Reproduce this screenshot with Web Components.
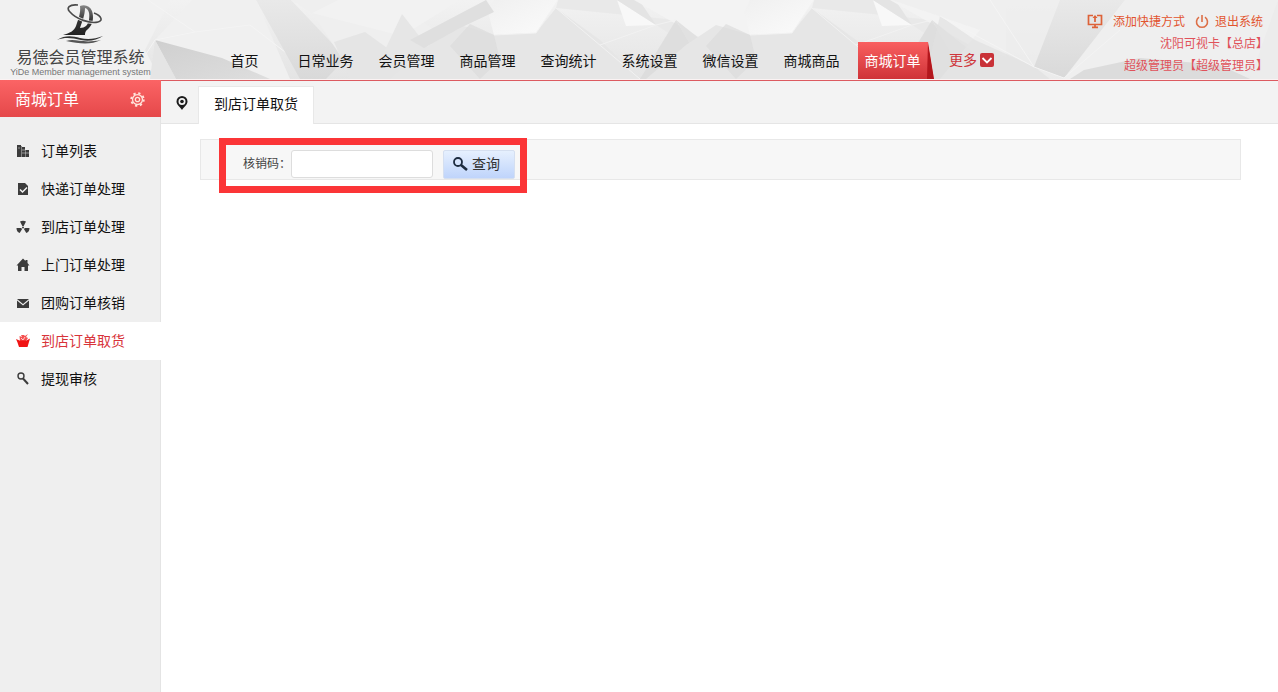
<!DOCTYPE html>
<html lang="zh-CN">
<head>
<meta charset="utf-8">
<title>到店订单取货</title>
<style>
html, body { height: 100%; }
body { margin: 0; background: #fff; color: #111; font: 14px/20px "Liberation Sans", "Noto Sans CJK SC", sans-serif; }
yd-app { min-height: 100%; }
</style>
</head>
<body>
<yd-app></yd-app>

<template id="t-app">
<style>
:host { display: flex; flex-direction: column; min-height: 100%; }
.body { display: flex; flex: 1; }
yd-sidebar { flex: none; }
main { flex: 1; min-width: 0; }
</style>
<yd-header></yd-header>
<div class="body">
  <yd-sidebar>
    <span slot="title">商城订单</span>
    <yd-item icon="list">订单列表</yd-item>
    <yd-item icon="doc">快递订单处理</yd-item>
    <yd-item icon="fan">到店订单处理</yd-item>
    <yd-item icon="home">上门订单处理</yd-item>
    <yd-item icon="mail">团购订单核销</yd-item>
    <yd-item icon="bag" active>到店订单取货</yd-item>
    <yd-item icon="key">提现审核</yd-item>
  </yd-sidebar>
  <main>
    <yd-tabs>到店订单取货</yd-tabs>
    <yd-search></yd-search>
  </main>
</div>
</template>

<template id="t-header">
<style>
:host { display: block; position: relative; background: #ececec; border-bottom: 1px solid #dc5a60; }
.bg { position: absolute; inset: 0; overflow: hidden; }
.bg svg { display: block; }
.row { position: relative; display: flex; height: 79px; border-bottom: 1px solid #fbf3f3; }
yd-logo { flex: none; width: 161px; }
nav { display: flex; align-items: flex-end; margin-left: 43px; }
yd-user { margin-left: auto; }
.more { display: flex; align-items: center; gap: 3px; height: 38px; margin-left: 16px; color: #cf353b; text-decoration: none; white-space: nowrap; }
</style>
<div class="bg"><svg width="1920" height="80" viewBox="0 0 1920 80" aria-hidden="true">
  <defs>
    <linearGradient id="base" x1="0" y1="0" x2="0" y2="1"><stop offset="0" stop-color="#f2f2f2"/><stop offset="1" stop-color="#e4e4e4"/></linearGradient>
    <linearGradient id="dark" x1="0" y1="0" x2="1" y2="1"><stop offset="0" stop-color="#cfcfcf"/><stop offset="1" stop-color="#dedede"/></linearGradient>
    <linearGradient id="band" x1="0" y1="0" x2="0" y2="1"><stop offset="0" stop-color="#e9e9e9"/><stop offset="1" stop-color="#d9d9d9"/></linearGradient>
    <linearGradient id="light" x1="0" y1="0" x2="1" y2="1"><stop offset="0" stop-color="#f0f0f0"/><stop offset="1" stop-color="#fbfbfb"/></linearGradient>
    <g id="facets">
      <path d="M494 0H558L536 33L494 35L488 12Z" fill="url(#light)"/>
      <path d="M460 25L494 35L536 33L556 8L600 40L640 79H390L430 45Z" fill="#e6e6e6"/>
      <path d="M494 35L470 24L450 46L480 79L500 60Z" fill="#dcdcdc" opacity=".7"/>
      <path d="M558 0H619L700 54L676 20L556 8Z" fill="#e9e9e9"/>
      <path d="M617 0L626 26L656 25Z" fill="#f8f8f8"/>
      <path d="M617 0H639L656 25Z" fill="#e4e4e4"/>
      <path d="M634 0H750V56L720 49Z" fill="#f3f3f3"/>
      <path d="M676 20L711 79H640Z" fill="#dbdbdb" opacity=".8"/>
      <path d="M676 20L750 79H710Z" fill="#e1e1e1"/>
      <path d="M558 0L536 33L494 35M556 8L640 79M600 45L656 25L676 20" fill="none" stroke="#f2f2f2"/>
    </g>
  </defs>
  <rect width="1920" height="80" fill="url(#base)"/>
  <path d="M0 0H170L145 50L160 79H0Z" fill="#f1f1f1"/>
  <path d="M192 0H256L290 79H200L155 40Z" fill="#f0f0f0"/>
  <path d="M155 40L222 58L270 79H176Z" fill="url(#dark)"/>
  <path d="M155 40L176 79H150Z" fill="#e5e5e5"/>
  <path d="M148 0L195 32L155 40L130 79M195 32L250 25L320 79" fill="none" stroke="#f4f4f4"/>
  <path d="M256 0H291L346 58L326 79H300Z" fill="url(#band)"/>
  <path d="M291 0H400L440 36L350 70L312 13Z" fill="#efefef"/>
  <path d="M312 13L338 0H460L402 36Z" fill="#f2f2f2"/>
  <path d="M334 42L365 32L430 79H350Z" fill="#e5e5e5"/>
  <path d="M402 14L430 50L410 79L385 50Z" fill="#e6e6e6"/>
  <use href="#facets"/>
  <path d="M486 0L494 12L460 28L424 48L410 40Z" fill="#dfdfdf"/>
  <use href="#facets" x="256"/>
  <path d="M892 0H1278V79H940L980 30Z" fill="#eee" opacity=".75"/>
  <path d="M940 16L975 40L1035 67L1050 79H925Z" fill="#e1e1e1" opacity=".7"/>
  <path d="M1060 0H1125L1064 78L1034 67Z" fill="url(#band)"/>
  <path d="M1125 0H1278V60L1170 79H1064Z" fill="#efefef"/>
  <path d="M1084 70L1140 58L1220 65L1250 79H1070Z" fill="#dcdcdc"/>
  <path d="M1034 67L1064 78L1120 30M940 16L1034 67L990 0" fill="none" stroke="#f4f4f4"/>
  <path d="M1278 0H1920V79H1250Z" fill="#ececec"/>
</svg></div>
<div class="row">
  <yd-logo></yd-logo>
  <nav aria-label="主导航">
    <yd-nav>首页</yd-nav><yd-nav>日常业务</yd-nav><yd-nav>会员管理</yd-nav><yd-nav>商品管理</yd-nav><yd-nav>查询统计</yd-nav><yd-nav>系统设置</yd-nav><yd-nav>微信设置</yd-nav><yd-nav>商城商品</yd-nav><yd-nav active>商城订单</yd-nav>
    <a class="more" href="#">更多<svg width="14" height="14" viewBox="0 0 14 14" aria-hidden="true"><rect width="14" height="14" rx="2" fill="#c93238"/><path d="M2.500 5L7 9.500L11.500 5" fill="none" stroke="#fff" stroke-width="1.800"/></svg></a>
  </nav>
  <yd-user></yd-user>
</div>
</template>

<template id="t-logo">
<style>
:host { display: flex; flex-direction: column; align-items: center; color: #444; white-space: nowrap; }
svg { display: block; margin-top: 4px; }
b { font-weight: 400; font-size: 16px; line-height: 20px; margin-top: 3px; }
small { font-size: 9px; line-height: 10px; color: #777; margin-top: -1px; }
</style>
<svg width="50" height="41" viewBox="0 0 50 41" aria-hidden="true">
  <defs><linearGradient id="ink" x1="0" y1="0" x2="0" y2="1"><stop offset="0" stop-color="#888"/><stop offset=".5" stop-color="#333"/><stop offset="1" stop-color="#222"/></linearGradient></defs>
  <path fill="url(#ink)" fill-rule="evenodd" d="M24 2C29 0 34 2 36 7C38 13 37 20 33 24C31 26 29 27 29 31L7 31C14 29 18 27 20 22C22 16 25 9 24 2ZM29 4C29 11 26 18 24 24C29 24 32 21 33 16C34 10 33 5 29 4Z"/>
  <path d="M22 1C13 0 10 4 14 8C20 15 34 20 42 18C47 17 46 12 38 9" fill="none" stroke="#f1f1f1" stroke-width="3"/>
  <path d="M22 1C13 0 10 4 14 8C20 15 34 20 42 18C47 17 46 12 38 9" fill="none" stroke="#4a4a4a" stroke-width="1.600"/>
  <path d="M1 36C9 31 16 32 24 34C32 36 39 35 47 32C41 36 33 38 25 36C16 34 9 33 1 36Z" fill="#333"/>
  <path d="M10 37C20 34 26 40 45 36C35 41 24 40 10 37Z" fill="#555"/>
</svg>
<b>易德会员管理系统</b><small>YiDe Member management system</small>
</template>

<template id="t-nav">
<style>
:host { display: block; width: 81px; }
a { display: block; box-sizing: border-box; height: 37px; line-height: 38px; text-align: center; color: #111; text-decoration: none; white-space: nowrap; }
:host([active]) a { position: relative; margin: 0 0 0 6px; padding-right: 7px; width: 76px; color: #fff; background: linear-gradient(#f95f60, #cf3338); clip-path: polygon(0 0, 70px 0, 76px 100%, 0 100%); }
:host([active]) a::after { content: ""; position: absolute; right: 0; top: 0; width: 7px; height: 37px; background: #b3171d; clip-path: polygon(1px 0, 100% 100%, 0 100%); }
</style>
<a href="#"><slot></slot></a>
</template>

<template id="t-user">
<style>
:host { display: block; padding: 11px 10px 0 0; color: #e0525a; font-size: 12px; line-height: 22px; text-align: right; white-space: nowrap; }
.top { display: flex; align-items: center; justify-content: flex-end; gap: 10px; padding-right: 5px; }
a { display: flex; align-items: center; gap: 6px; color: #e2542e; text-decoration: none; }
a:first-child { gap: 10px; }
</style>
<div class="top">
  <a href="#"><svg width="16" height="16" viewBox="0 0 16 16" aria-hidden="true" fill="none" stroke="#dd6238" stroke-width="1.700"><path d="M6 1.500H1.500V10.500H14.500V1.500H10M8 8V2"/><path d="M5.500 4L8 1L10.500 4Z" fill="#dd6238" stroke="none"/><path d="M8 11V13M5 13.300H11"/></svg>添加快捷方式</a>
  <a href="#"><svg width="14" height="14" viewBox="0 0 14 14" aria-hidden="true" fill="none" stroke="#dd7048" stroke-width="1.600"><path d="M4 2.200A5.500 5.500 0 1 0 10 2.200M7 0V7"/></svg>退出系统</a>
</div>
<div>沈阳可视卡【总店】</div>
<div>超级管理员【超级管理员】</div>
</template>

<template id="t-sidebar">
<style>
:host { display: block; box-sizing: border-box; width: 161px; background: #efefef; border-right: 1px solid #e4e4e4; }
header { position: relative; display: flex; align-items: center; justify-content: space-between; height: 37px; margin: -1px -1px 0 0; padding: 2px 16px 0 15px; box-sizing: border-box; color: #fff; font-size: 16px; background: linear-gradient(#fb6465, #e5484a); }
nav { padding-top: 15px; }
button { display: block; border: 0; padding: 0; background: none; }
svg { display: block; }
</style>
<header><slot name="title"></slot><button type="button" aria-label="设置"><svg width="15" height="15" viewBox="0 0 16 16" fill="none" stroke="#ffe4dc" stroke-width="1.400"><circle cx="8" cy="8" r="2.300"/><circle cx="8" cy="8" r="5.300"/><circle cx="8" cy="8" r="6.700" stroke-width="2" stroke-dasharray="2.400 2.862"/></svg></button></header>
<nav aria-label="侧栏"><slot></slot></nav>
</template>

<template id="t-item">
<style>
:host { display: block; --ink: #3c3c3c; }
:host([active]) { --ink: #f01414; background: #fff; margin-right: -1px; }
a { display: flex; align-items: center; gap: 11px; height: 38px; padding-left: 16px; color: #111; text-decoration: none; white-space: nowrap; }
:host([active]) a { color: #d8343a; }
svg { flex: none; width: 14px; height: 14px; color: var(--ink); }
</style>
<a href="#"><svg viewBox="0 0 14 14" aria-hidden="true"></svg><slot></slot></a>
</template>

<template id="t-tabs">
<style>
:host { display: flex; box-sizing: border-box; height: 43px; padding: 5px 0 0 14px; background: #f3f3f3; border-bottom: 1px solid #e5e5e5; }
svg { flex: none; margin: 10px 9px 0 0; }
a { box-sizing: border-box; height: 38px; padding: 0 15px; border: 1px solid #e8e8e8; border-bottom: 0; background: #fff; color: #111; line-height: 35px; text-decoration: none; white-space: nowrap; }
</style>
<svg width="14" height="14" viewBox="0 0 14 14" aria-hidden="true"><path fill="#1c1c1c" fill-rule="evenodd" d="M7 0A5.500 5.500 0 0 1 12.500 5.500C12.500 9 8.500 11 7 14C5.500 11 1.500 9 1.500 5.500A5.500 5.500 0 0 1 7 0ZM7 2A3.500 3.500 0 1 0 7 9A3.500 3.500 0 1 0 7 2Z"/><circle cx="7" cy="5.500" r="1.800" fill="#1c1c1c"/></svg>
<a href="#"><slot></slot></a>
</template>

<template id="t-search">
<style>
:host { display: block; margin: 15px 37px 0 39px; }
form { position: relative; display: flex; align-items: flex-start; box-sizing: border-box; height: 41px; padding: 10px 0 0 42px; border: 1px solid #e8e8e8; background: #f7f7f7; }
form::after { content: ""; position: absolute; left: 18px; top: -2px; width: 308px; height: 55px; box-sizing: border-box; border: 7px solid #fb3537; pointer-events: none; }
label { width: 48px; line-height: 28px; font-size: 12px; color: #444; white-space: nowrap; }
input { box-sizing: border-box; width: 142px; height: 28px; margin: 0 10px 0 0; padding: 0 6px; border: 1px solid #ddd; border-radius: 3px; background: #fff; font: inherit; outline: 0; }
button { display: flex; align-items: center; gap: 4px; box-sizing: border-box; width: 72px; height: 29px; margin: 0; padding: 0 8px 2px; border: 1px solid #d5dff0; border-radius: 2px; background: linear-gradient(#e6f0fe, #bfd4fb); color: #333; font: inherit; white-space: nowrap; }
</style>
<form onsubmit="return false">
  <label for="code">核销码：</label><input id="code" type="text">
  <button type="submit"><svg width="16" height="16" viewBox="0 0 16 16" aria-hidden="true" fill="none" stroke="#1d2c40"><circle cx="6" cy="6" r="4" stroke-width="1.800"/><path d="M9 9L15 14" stroke-width="2.600"/></svg>查询</button>
</form>
</template>

<script>
const icons = {
  list: '<path fill="currentColor" d="M1 1H5V13H1ZM6 3H9V13H6ZM10 6H13V13H10Z"/><path fill="currentColor" opacity=".6" d="M5 2H6V13H5ZM9 6H10V13H9Z"/><path stroke="#efefef" stroke-width=".5" d="M2 4H4M6 6H9M6 9H13"/>',
  doc: '<path fill="currentColor" d="M2 1H9L12 4V13H2Z"/><path fill="none" stroke="#f4f4f4" stroke-width="1.500" d="M4 7.500L6.500 10L11 5.500"/>',
  fan: '<path fill="currentColor" d="M4 1.500C6 .5 8 .5 10 1.500L7.700 6H6.300ZM.5 8H5.300L6 9.300L3.700 13C1.500 12.500 .5 10.500 .5 8ZM13.500 8H8.700L8 9.300L10.300 13C12.500 12.500 13.500 10.500 13.500 8Z"/><circle cx="7" cy="7.500" r="1" fill="currentColor"/>',
  home: '<path fill="currentColor" d="M7 0.500L9.500 3V2H11.500V5L13.500 7.500H12V13H8.500V9H5.500V13H2V7.500H0.500Z"/>',
  mail: '<path fill="currentColor" d="M1 3H13L7 8ZM1 4.500L7 9.500L13 4.500V12H1Z"/>',
  bag: '<path fill="currentColor" d="M0 5L3.500 6.500H10.500L14 4.500L11.500 13H3L1.500 8.500Z"/><path fill="currentColor" opacity=".75" d="M3.500 2L6 3L5 1H8L9 2L12 0L10 3L12 4L10 7H4Z"/><path stroke="#fff" stroke-width=".7" fill="none" d="M5 4L7 6L9 3"/>',
  key: '<circle cx="5" cy="4" r="3" fill="none" stroke="currentColor" stroke-width="1.400"/><path stroke="currentColor" stroke-width="2" d="M7 6.500L12 12"/>'
};
for (const name of ['logo', 'nav', 'user', 'item', 'sidebar', 'tabs', 'search', 'header', 'app']) {
  customElements.define('yd-' + name, class extends HTMLElement {
    constructor() {
      super();
      this.attachShadow({ mode: 'open' }).append(document.getElementById('t-' + name).content.cloneNode(true));
    }
    connectedCallback() {
      if (name === 'item') this.shadowRoot.querySelector('svg').innerHTML = icons[this.getAttribute('icon')] || '';
    }
  });
}
</script>
</body>
</html>
